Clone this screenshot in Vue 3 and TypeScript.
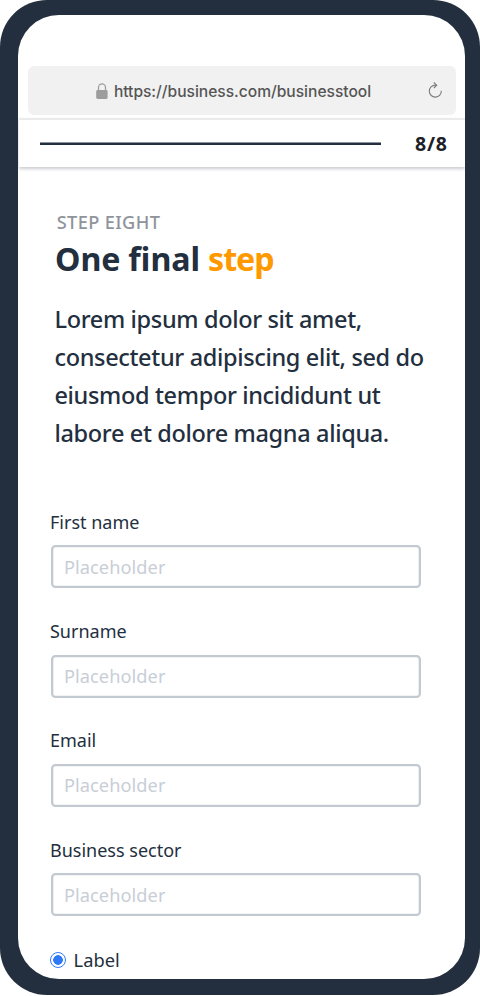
<script setup lang="ts">
import { ref } from 'vue'

interface Field {
  id: string
  label: string
}

const fields: Field[] = [
  { id: 'first-name', label: 'First name' },
  { id: 'surname', label: 'Surname' },
  { id: 'email', label: 'Email' },
  { id: 'sector', label: 'Business sector' },
]
const values = ref<Record<string, string>>({})
const picked = ref('label')
</script>

<template>
  <div class="phone">
    <div class="screen">
      <div class="browser">
        <div class="address">
          <svg class="lock" width="12" height="17" viewBox="0 0 12 17">
            <path d="M2.5 8V4.6a3.5 3.7 0 0 1 7 0V8" fill="none" stroke="#9d9d9d" stroke-width="1.3" />
            <rect x="0.2" y="7" width="11.4" height="9" rx="1.4" fill="#9d9d9d" />
          </svg>
          <span class="url">https://business.com/businesstool</span>
          <svg class="reload" width="15" height="17" viewBox="0 0 15 17" fill="none" stroke="#7d7d7d" stroke-width="1.1">
            <path d="M8.6 3.1H7.3A6 6 0 1 0 13.3 8.7" />
            <path d="M5.8 0.5L8.7 3.2L5.9 6" />
          </svg>
        </div>
      </div>
      <header class="progress">
        <div class="track"></div>
        <span class="count">8/8</span>
      </header>
      <main class="content">
        <p class="eyebrow">STEP EIGHT</p>
        <h1 class="title">One final <span class="accent">step</span></h1>
        <p class="lead">
          Lorem ipsum dolor sit amet,<br />
          consectetur adipiscing elit, sed do<br />
          eiusmod tempor incididunt ut<br />
          labore et dolore magna aliqua.
        </p>
        <form class="form" @submit.prevent>
          <div v-for="f in fields" :key="f.id" class="field">
            <label class="label" :for="f.id">{{ f.label }}</label>
            <input :id="f.id" v-model="values[f.id]" class="input" type="text" placeholder="Placeholder" />
          </div>
          <label class="choice">
            <input v-model="picked" class="radio" type="radio" value="label" />
            <span class="choice-text">Label</span>
          </label>
        </form>
      </main>
    </div>
  </div>
</template>

<style>
body {
  background: #fff;
}
</style>

<style scoped>
.phone {
  box-sizing: border-box;
  width: 480px;
  height: 995.4px;
  padding: 15.3px 15.3px 16px 17.7px;
  border-radius: 47px;
  background: #232f3e;
  font-family: "Noto Sans", "Open Sans", sans-serif;
  color: #232f3e;
}
.screen {
  height: 100%;
  box-sizing: border-box;
  padding-top: 51px;
  border-radius: 41px;
  background: #fff;
  overflow: hidden;
}
.browser {
  padding: 0 8.7px 3px 10.7px;
}
.address {
  display: flex;
  align-items: center;
  height: 49px;
  box-sizing: border-box;
  padding: 1px 13px 0 67.5px;
  border-radius: 6px;
  background: #f1f1f1;
}
.url {
  margin: 1px 0 0 6px;
  font-family: Inter, sans-serif;
  font-size: 15.6px;
  line-height: 20px;
  font-weight: 450;
  letter-spacing: -0.02px;
  color: #555;
}
.reload {
  margin: -1.5px 0 0 auto;
}
.progress {
  display: flex;
  align-items: center;
  box-sizing: border-box;
  height: 48.5px;
  margin-left: 1.3px;
  padding: 0.6px 17.5px 0 21px;
  border-top: 2px solid #e9ebed;
  box-shadow: 0 2px 3px rgba(35, 47, 62, 0.24);
}
.track {
  width: 341.5px;
  height: 3px;
  background: linear-gradient(rgba(35, 47, 62, 0.5) 1px, #232f3e 1px);
}
.count {
  margin-left: auto;
  font-size: 19.5px;
  line-height: 24px;
  font-weight: 700;
  letter-spacing: 0.7px;
  margin-right: -0.4px;
  color: #1c2128;
}
.content {
  padding: 43.3px 0 0 32.3px;
}
.eyebrow {
  margin: 0 0 0 6.7px;
  font-size: 18.2px;
  line-height: 25px;
  font-weight: 500;
  letter-spacing: 0.38px;
  color: #8f949b;
}
.title {
  margin: 4px 0 0 5px;
  font-size: 32.2px;
  line-height: 40px;
  font-weight: 700;
  word-spacing: -0.6px;
}
.accent {
  color: #ff9900;
  letter-spacing: -1px;
}
.lead {
  margin: 21px 0 0 4.5px;
  font-size: 23.5px;
  line-height: 38px;
  font-weight: 500;
  letter-spacing: -0.35px;
  white-space: nowrap;
}
.form {
  padding-top: 57.6px;
}
.field {
  height: 109.35px;
}
.label {
  display: block;
  font-size: 18px;
  line-height: 25px;
  font-weight: 440;
}
.input {
  display: block;
  box-sizing: border-box;
  width: 370px;
  height: 43px;
  margin: 10.5px 0 0 0.9px;
  padding: 0 11px;
  border: 2px solid #c3c9d1;
  border-radius: 4.5px;
  box-shadow: inset 0 0 0 0.3px #c3c9d1;
  background: #fff;
  outline: none;
  font-family: inherit;
  font-size: 18.2px;
  letter-spacing: 0.08px;
  color: #232f3e;
}
.input::placeholder {
  color: #c8ced6;
  opacity: 1;
}
.choice {
  display: flex;
  align-items: center;
  height: 25px;
  font-size: 18.3px;
  line-height: 25px;
}
.radio {
  appearance: none;
  box-sizing: border-box;
  width: 16px;
  height: 16px;
  margin: 0;
  border: 1.4px solid #347bf5;
  border-radius: 50%;
  background: radial-gradient(circle, #2f78f6 4.5px, #fff 5.1px);
}
.choice-text {
  margin: -1px 0 0 7.6px;
}
</style>
